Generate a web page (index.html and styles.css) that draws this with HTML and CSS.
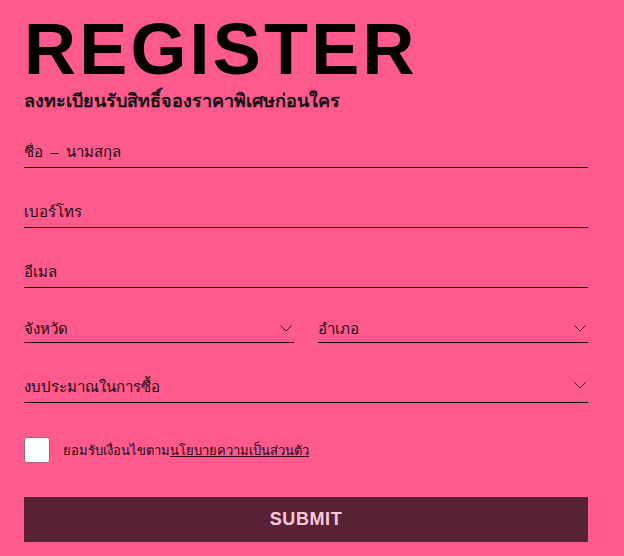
FILE: index.html
```html
<!DOCTYPE html>
<html lang="th">
<head>
<meta charset="UTF-8">
<meta name="viewport" content="width=device-width, initial-scale=1.0">
<title>Register</title>
<link rel="stylesheet" href="styles.css">
</head>
<body>
<div class="register">
    <h1>REGISTER</h1>
    <p class="subtitle">ลงทะเบียนรับสิทธิ์จองราคาพิเศษก่อนใคร</p>
    <form class="register-form">
        <div class="field">
            <input type="text" placeholder="ชื่อ – นามสกุล">
        </div>
        <div class="field">
            <input type="text" placeholder="เบอร์โทร">
        </div>
        <div class="field">
            <input type="text" placeholder="อีเมล">
        </div>
        <div class="field-row">
            <div class="field select">
                <span>จังหวัด</span>
                <svg width="12" height="7" viewBox="0 0 12 7"><path d="M0.5 0.5 L6 6 L11.5 0.5" fill="none" stroke="#3a1020" stroke-width="1"/></svg>
            </div>
            <div class="field select">
                <span>อำเภอ</span>
                <svg width="12" height="7" viewBox="0 0 12 7"><path d="M0.5 0.5 L6 6 L11.5 0.5" fill="none" stroke="#3a1020" stroke-width="1"/></svg>
            </div>
        </div>
        <div class="field select budget">
            <span>งบประมาณในการซื้อ</span>
            <svg width="12" height="7" viewBox="0 0 12 7"><path d="M0.5 0.5 L6 6 L11.5 0.5" fill="none" stroke="#3a1020" stroke-width="1"/></svg>
        </div>
        <label class="consent">
            <span class="box"></span>
            <span>ยอมรับเงื่อนไขตาม<a href="#">นโยบายความเป็นส่วนตัว</a></span>
        </label>
        <button type="button">SUBMIT</button>
    </form>
</div>
</body>
</html>
```

FILE: styles.css
```css
body {
    margin: 0;
    background-color: #fe5a8d;
    font-family: "Liberation Sans", "Noto Sans", sans-serif;
    color: #111;
}
.register {
    padding: 0 36px 0 24px;
}
.register h1 {
    margin: 0;
    padding-top: 11px;
    font-size: 72px;
    line-height: 76px;
    font-weight: 700;
    letter-spacing: 3.2px;
    color: #000;
}
.register .subtitle {
    margin: 0;
    margin-top: 2px;
    font-size: 18px;
    font-weight: 700;
    line-height: 24px;
    color: #111;
}
.register-form {
    margin-top: 23px;
}
.field {
    border-bottom: 1px solid #1a0a10;
    height: 31px;
    margin-bottom: 28px;
    display: flex;
    align-items: center;
}
.field input {
    width: 100%;
    border: none;
    background: transparent;
    font-family: inherit;
    font-size: 15px;
    word-spacing: 3px;
    padding: 0;
    outline: none;
}
.field input::placeholder {
    color: #1a0a10;
}
.field.select {
    height: 26px;
    justify-content: space-between;
    font-size: 15px;
    color: #1a0a10;
    padding-right: 2px;
}
.field.select.budget {
    height: 31px;
    margin-bottom: 34px;
}
.field.select svg {
    margin-bottom: 2px;
}
.field-row {
    display: grid;
    grid-template-columns: 1fr 1fr;
    gap: 24px;
}
.consent {
    display: flex;
    align-items: center;
    gap: 13px;
    font-size: 13px;
    color: #2a0a16;
}
.consent .box {
    width: 24px;
    height: 24px;
    background: #fff;
    border: 1px solid #9a6a78;
    border-radius: 3px;
}
.consent a {
    color: inherit;
}
.register-form button {
    display: block;
    width: 100%;
    height: 45px;
    margin-top: 34px;
    border: none;
    background-color: #582234;
    color: #fcc6da;
    font-family: "Liberation Sans", sans-serif;
    font-weight: 700;
    font-size: 18px;
    letter-spacing: 0.6px;
}
```
